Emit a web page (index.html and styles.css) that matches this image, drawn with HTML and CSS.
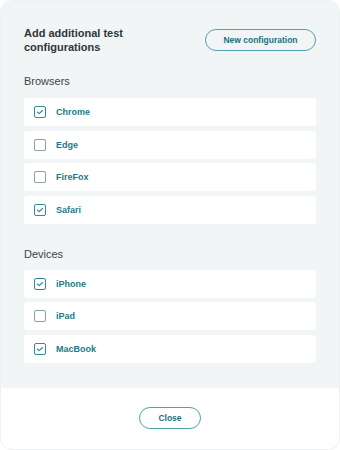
FILE: index.html
```html
<!DOCTYPE html>
<html>
<head>
<meta charset="utf-8">
<link rel="stylesheet" href="styles.css">
</head>
<body>
<div class="modal">
  <div class="panel">
    <div class="header">
      <h1 class="title">Add additional test<br>configurations</h1>
      <button class="pill new">New configuration</button>
    </div>
    <div class="section-label first">Browsers</div>
    <div class="list">
      <div class="row"><span class="box checked"><svg viewBox="0 0 12 12"><path d="M2.8 6 L5 8 L9 4.2"/></svg></span><span class="label">Chrome</span></div>
      <div class="row"><span class="box"></span><span class="label">Edge</span></div>
      <div class="row"><span class="box"></span><span class="label">FireFox</span></div>
      <div class="row"><span class="box checked"><svg viewBox="0 0 12 12"><path d="M2.8 6 L5 8 L9 4.2"/></svg></span><span class="label">Safari</span></div>
    </div>
    <div class="section-label second">Devices</div>
    <div class="list">
      <div class="row"><span class="box checked"><svg viewBox="0 0 12 12"><path d="M2.8 6 L5 8 L9 4.2"/></svg></span><span class="label">iPhone</span></div>
      <div class="row"><span class="box"></span><span class="label">iPad</span></div>
      <div class="row"><span class="box checked"><svg viewBox="0 0 12 12"><path d="M2.8 6 L5 8 L9 4.2"/></svg></span><span class="label">MacBook</span></div>
    </div>
  </div>
  <div class="footer">
    <button class="pill close">Close</button>
  </div>
</div>
</body>
</html>
```
FILE: styles.css
```css
* { box-sizing: border-box; }
html, body { margin: 0; padding: 0; background: #ffffff; }
body { font-family: "Liberation Sans", Arial, sans-serif; }
.modal {
  width: 340px;
  height: 450px;
  border-radius: 12px;
  overflow: hidden;
  border: 1px solid #eef0f1;
  display: flex;
  flex-direction: column;
  background: #ffffff;
}
.panel {
  background: #f1f5f6;
  padding: 25px 23px 23px 23px;
  height: 387px;
}
.header {
  display: flex;
  justify-content: space-between;
  align-items: center;
}
.title {
  margin: 0;
  font-size: 11px;
  line-height: 14px;
  font-weight: bold;
  color: #2f3638;
}
.pill {
  font-family: "Liberation Sans", Arial, sans-serif;
  background: transparent;
  border: 1px solid #4fa3ae;
  border-radius: 12px;
  color: #1b7280;
  font-weight: bold;
  font-size: 8.5px;
  padding: 0;
  cursor: pointer;
}
.new { width: 111px; height: 22px; margin-right: 0; }
.section-label {
  margin-bottom: 10px;
  font-size: 11px;
  line-height: 14px;
  color: #3d4446;
}
.section-label.first { margin-top: 20px; }
.section-label.second { margin-top: 23px; margin-bottom: 9px; }
.list {
  display: flex;
  flex-direction: column;
  gap: 4.5px;
}
.row {
  height: 28px;
  background: #ffffff;
  border-radius: 3px;
  display: flex;
  align-items: center;
  padding-left: 10px;
}
.box {
  width: 12px;
  height: 12px;
  border: 1px solid #8d9ea6;
  border-radius: 2px;
  background: #ffffff;
  display: flex;
}
.box.checked { border-color: #2f8c99; }
.box svg { width: 10px; height: 10px; }
.box svg path { fill: none; stroke: #2a8794; stroke-width: 1.3; stroke-linecap: round; stroke-linejoin: round; }
.label {
  margin-left: 10px;
  font-size: 9px;
  font-weight: bold;
  color: #1b7a88;
}
.footer {
  flex: 1;
  display: flex;
  justify-content: center;
  padding-top: 19px;
}
.close { width: 62px; height: 22px; }
```
